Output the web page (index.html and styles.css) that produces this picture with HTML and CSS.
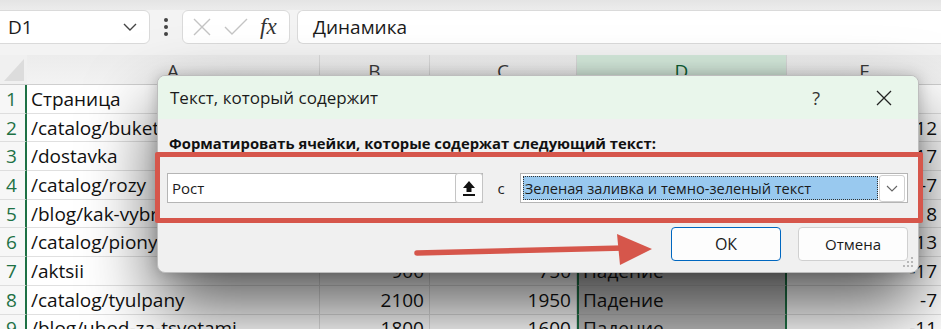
FILE: index.html
```html
<!DOCTYPE html>
<html lang="ru">
<head>
    <meta charset="UTF-8">
    <title>Текст, который содержит</title>
    <link rel="stylesheet" href="styles.css">
</head>
<body>
    <div class="ribbon"></div>

    <div class="formula-bar">
        <div class="name-box">
            <span>D1</span>
            <svg class="chevron" width="14" height="8" viewBox="0 0 14 8"><path d="M1 1 L7 7 L13 1" fill="none" stroke="#444" stroke-width="1.4"/></svg>
        </div>
        <svg class="more" width="6" height="20" viewBox="0 0 6 20"><circle cx="3" cy="3" r="2" fill="#444"/><circle cx="3" cy="10" r="2" fill="#444"/><circle cx="3" cy="17" r="2" fill="#444"/></svg>
        <div class="fx-box">
            <svg width="20" height="20" viewBox="0 0 20 20"><path d="M2 2 L18 18 M18 2 L2 18" stroke="#c4c4c4" stroke-width="1.4"/></svg>
            <svg width="24" height="18" viewBox="0 0 24 18"><path d="M1 9 L8 16 L23 1" fill="none" stroke="#c4c4c4" stroke-width="1.4"/></svg>
            <span class="fx">fx</span>
        </div>
        <div class="formula-input">Динамика</div>
    </div>

    <div class="sheet">
        <div class="corner"><svg width="20" height="22" viewBox="0 0 20 22"><path d="M20 0 L20 22 L0 22 Z" fill="#dcdcdc"/></svg></div>
        <div class="col-head">A</div>
        <div class="col-head">B</div>
        <div class="col-head">C</div>
        <div class="col-head selected">D</div>
        <div class="col-head">E</div>

        <div class="row-head">1</div><div class="cell">Страница</div><div class="cell num">Было</div><div class="cell num">Стало</div><div class="cell sel">Динамика</div><div class="cell">Изм., %</div>
        <div class="row-head">2</div><div class="cell">/catalog/bukety</div><div class="cell num">1200</div><div class="cell num">1350</div><div class="cell sel">Рост</div><div class="cell num">12</div>
        <div class="row-head">3</div><div class="cell">/dostavka</div><div class="cell num">600</div><div class="cell num">700</div><div class="cell sel">Рост</div><div class="cell num">17</div>
        <div class="row-head">4</div><div class="cell">/catalog/rozy</div><div class="cell num">1500</div><div class="cell num">1400</div><div class="cell sel">Падение</div><div class="cell num">-7</div>
        <div class="row-head">5</div><div class="cell">/blog/kak-vybrat-buket</div><div class="cell num">500</div><div class="cell num">540</div><div class="cell sel">Рост</div><div class="cell num">8</div>
        <div class="row-head">6</div><div class="cell">/catalog/piony</div><div class="cell num">800</div><div class="cell num">900</div><div class="cell sel">Рост</div><div class="cell num">13</div>
        <div class="row-head">7</div><div class="cell">/aktsii</div><div class="cell num">900</div><div class="cell num">750</div><div class="cell sel">Падение</div><div class="cell num">-17</div>
        <div class="row-head">8</div><div class="cell">/catalog/tyulpany</div><div class="cell num">2100</div><div class="cell num">1950</div><div class="cell sel">Падение</div><div class="cell num">-7</div>
        <div class="row-head">9</div><div class="cell">/blog/uhod-za-tsvetami</div><div class="cell num">1800</div><div class="cell num">1600</div><div class="cell sel">Падение</div><div class="cell num">-11</div>
    </div>

    <div class="dialog">
        <div class="dialog-title">
            <span>Текст, который содержит</span>
            <span class="help">?</span>
            <svg class="close" width="16" height="16" viewBox="0 0 16 16"><path d="M1 1 L15 15 M15 1 L1 15" stroke="#222" stroke-width="1.3"/></svg>
        </div>
        <div class="dialog-body">
            <div class="label">Форматировать ячейки, которые содержат следующий текст:</div>
            <div class="input-row">
                <div class="text-input">
                    <span>Рост</span>
                    <div class="pick-btn">
                        <svg width="14" height="16" viewBox="0 0 14 16"><path d="M7 1 L13 8 L9.5 8 L9.5 12 L4.5 12 L4.5 8 L1 8 Z" fill="#111"/><rect x="1" y="14" width="12" height="2" fill="#111"/></svg>
                    </div>
                </div>
                <span class="with">с</span>
                <div class="select">
                    <span class="select-value">Зеленая заливка и темно-зеленый текст</span>
                    <div class="drop-btn">
                        <svg width="12" height="7" viewBox="0 0 12 7"><path d="M1 1 L6 6 L11 1" fill="none" stroke="#666" stroke-width="1.1"/></svg>
                    </div>
                </div>
            </div>
            <div class="buttons">
                <button class="btn primary">ОК</button>
                <button class="btn">Отмена</button>
            </div>
        </div>
        <svg class="grip" width="12" height="12" viewBox="0 0 12 12"><g fill="#b8b8b8"><rect x="8" y="0" width="2" height="2"/><rect x="4" y="4" width="2" height="2"/><rect x="8" y="4" width="2" height="2"/><rect x="0" y="8" width="2" height="2"/><rect x="4" y="8" width="2" height="2"/><rect x="8" y="8" width="2" height="2"/></g></svg>
    </div>

    <div class="callout"></div>
    <svg class="arrow" width="941" height="329" viewBox="0 0 941 329">
        <path d="M417 253 L624 248" stroke="#d6564b" stroke-width="5.5" stroke-linecap="round"/>
        <path d="M617 234 L652 249 L620 265 Z" fill="#d6564b"/>
    </svg>
</body>
</html>
```

FILE: styles.css
```css
* {
    margin: 0;
    padding: 0;
    box-sizing: border-box;
}

body {
    width: 941px;
    height: 329px;
    overflow: hidden;
    position: relative;
    background: #f3f3f3;
    font-family: "Open Sans", "Noto Sans", sans-serif;
    color: #1b1b1b;
}

.ribbon {
    height: 10px;
    background: linear-gradient(#e4e4e4, #ececec);
}

.formula-bar {
    height: 34px;
    display: flex;
    align-items: center;
    margin-bottom: 11px;
}

.name-box {
    width: 156px;
    height: 34px;
    margin-left: -6px;
    padding: 0 12px 0 13px;
    display: flex;
    align-items: center;
    justify-content: space-between;
    background: #fff;
    border: 1px solid #dadada;
    border-radius: 6px;
    font-size: 19px;
}

.more {
    margin: 0 13px 0 13px;
}

.fx-box {
    width: 108px;
    height: 34px;
    display: flex;
    align-items: center;
    gap: 12px;
    padding-left: 9px;
    background: #fff;
    border: 1px solid #dadada;
    border-radius: 6px;
}

.fx {
    font-family: "Liberation Serif", serif;
    font-style: italic;
    font-size: 23px;
    color: #333;
}

.formula-input {
    flex: 1;
    height: 34px;
    margin-left: 7px;
    padding-left: 15px;
    display: flex;
    align-items: center;
    background: #fff;
    border: 1px solid #dadada;
    border-right: none;
    border-radius: 6px 0 0 6px;
    font-size: 19px;
}

.sheet {
    display: grid;
    grid-template-columns: 27px 293px 110px 147px 210px 156px;
    grid-template-rows: 30px;
    grid-auto-rows: 28.7px;
    background: #fff;
    font-size: 19px;
}

.corner {
    background: #f0f0f0;
    border-bottom: 1px solid #cfcfcf;
    display: flex;
    align-items: flex-end;
    justify-content: center;
    padding-bottom: 3px;
}

.col-head {
    background: linear-gradient(#ececec, #f3f3f3);
    border-right: 1px solid #d8d8d8;
    border-bottom: 1px solid #cfcfcf;
    display: flex;
    align-items: center;
    justify-content: center;
    color: #3a3a3a;
    font-size: 19px;
    padding-top: 2px;
}

.col-head.selected {
    background: #d3e8da;
    color: #0f5e34;
}

.row-head {
    background: #f7f7f7;
    border-right: 2px solid #1e7145;
    border-bottom: 1px solid #dedede;
    color: #1e7145;
    display: flex;
    align-items: center;
    padding-left: 6px;
}

.cell {
    border-right: 1px solid #e0e0e0;
    border-bottom: 1px solid #e0e0e0;
    padding: 0 5px 0 4px;
    display: flex;
    align-items: center;
    white-space: nowrap;
    overflow: hidden;
    color: #111;
}

.cell.num {
    justify-content: flex-end;
}

.cell.sel {
    background: #bdbdbd;
    border-left: 2px solid #1e7145;
    border-right: 2px solid #1e7145;
    border-bottom-color: #b0b0b0;
}

.dialog {
    position: absolute;
    left: 157px;
    top: 75px;
    width: 762px;
    height: 198px;
    background: #f0f0f0;
    border: 1px solid #bdbdbd;
    border-radius: 8px;
    box-shadow: 0 34px 70px rgba(0, 0, 0, 0.65), 0 0 14px rgba(0, 0, 0, 0.2);
    overflow: hidden;
}

.dialog-title {
    height: 43px;
    background: #e9f6eb;
    display: flex;
    align-items: center;
    padding-left: 12px;
    font-size: 17px;
    color: #1b1b1b;
}

.help {
    margin-left: auto;
    font-size: 18px;
    color: #333;
    margin-right: 56px;
}

.close {
    margin-right: 26px;
}

.dialog-body {
    padding: 14px 10px 0 9px;
}

.label {
    font-size: 14.8px;
    font-weight: 700;
    line-height: 20px;
    padding-left: 2px;
    color: #111;
}

.input-row {
    display: flex;
    align-items: center;
    margin-top: 20px;
    height: 30px;
}

.text-input {
    width: 317px;
    height: 30px;
    background: #fff;
    border: 1px solid #b5b5b5;
    display: flex;
    align-items: center;
    justify-content: space-between;
    padding-left: 4px;
    font-size: 15px;
}

.pick-btn {
    width: 28px;
    height: 30px;
    margin-top: -1px;
    margin-right: -1px;
    background: #fdfdfd;
    border: 1px solid #c4c4c4;
    border-radius: 3px;
    display: flex;
    align-items: center;
    justify-content: center;
}

.with {
    font-size: 15px;
    margin: 0 15px 0 15px;
    color: #222;
}

.select {
    width: 390px;
    height: 30px;
    background: #fff;
    border: 1px solid #b5b5b5;
    display: flex;
    align-items: center;
    padding: 2px;
    gap: 1px;
}

.select-value {
    flex: 1;
    height: 24px;
    background: #99c9ef;
    border: 1px dotted #333;
    font-size: 14.6px;
    line-height: 22px;
    padding-left: 1px;
    white-space: nowrap;
    overflow: hidden;
}

.drop-btn {
    width: 26px;
    height: 27px;
    background: #fff;
    border: 1px solid #d0d0d0;
    border-radius: 3px;
    display: flex;
    align-items: center;
    justify-content: center;
}

.buttons {
    display: flex;
    justify-content: flex-end;
    gap: 17px;
    margin-top: 24px;
}

.btn {
    width: 110px;
    height: 34px;
    background: #fdfdfd;
    border: 1px solid #d0d0d0;
    border-radius: 4px;
    font-family: inherit;
    font-size: 15px;
    color: #1b1b1b;
}

.btn.primary {
    border-color: #0067c0;
    font-size: 16px;
}

.grip {
    position: absolute;
    right: 3px;
    bottom: 3px;
}

.callout {
    position: absolute;
    left: 155px;
    top: 152px;
    width: 768px;
    height: 71px;
    border: 5px solid #d6564b;
    border-radius: 2px;
}

.arrow {
    position: absolute;
    left: 0;
    top: 0;
}
```
